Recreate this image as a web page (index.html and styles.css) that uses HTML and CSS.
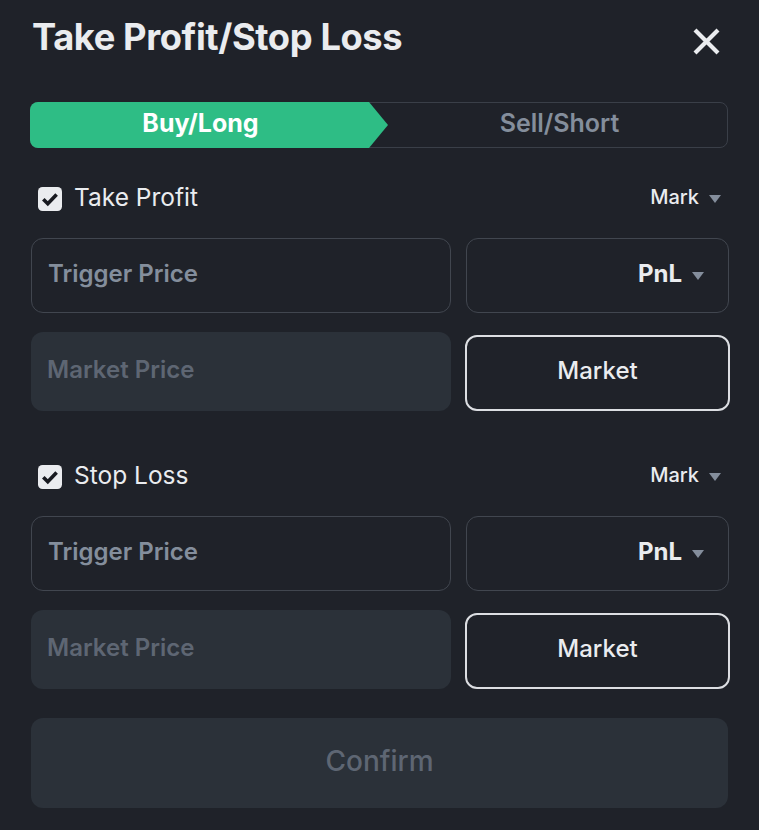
FILE: index.html
```html
<!DOCTYPE html>
<html lang="en">
<head>
<meta charset="utf-8">
<title>Take Profit/Stop Loss</title>
<link rel="stylesheet" href="styles.css">
</head>
<body>
<div class="panel">
  <div class="head">
    <h1 class="title">Take Profit/Stop Loss</h1>
    <svg class="close" width="27" height="27" viewBox="0 0 27 27"><path d="M2 2L25 25M25 2L2 25" stroke="#eaecef" stroke-width="4.2"/></svg>
  </div>

  <div class="tabs">
    <div class="tab tab-active">Buy/Long</div>
    <div class="tab tab-idle">Sell/Short</div>
  </div>

  <div class="section">
    <div class="sec-head">
      <label class="check">
        <svg width="24" height="24" viewBox="0 0 24 24"><rect x="0" y="0" width="24" height="24" rx="4.5" fill="#eaecef"/><path d="M5.3 12.3L9.8 16.8L18.6 7.6" fill="none" stroke="#181a20" stroke-width="3.6"/></svg>
        <span class="check-label">Take Profit</span>
      </label>
      <div class="mark">Mark <span class="caret"></span></div>
    </div>
    <div class="grid">
      <div class="field field-input">Trigger Price</div>
      <div class="field field-select"><span class="pnl">PnL</span><span class="caret"></span></div>
      <div class="field field-disabled">Market Price</div>
      <div class="btn-market">Market</div>
    </div>
  </div>

  <div class="section section-sl">
    <div class="sec-head">
      <label class="check">
        <svg width="24" height="24" viewBox="0 0 24 24"><rect x="0" y="0" width="24" height="24" rx="4.5" fill="#eaecef"/><path d="M5.3 12.3L9.8 16.8L18.6 7.6" fill="none" stroke="#181a20" stroke-width="3.6"/></svg>
        <span class="check-label">Stop Loss</span>
      </label>
      <div class="mark">Mark <span class="caret"></span></div>
    </div>
    <div class="grid">
      <div class="field field-input">Trigger Price</div>
      <div class="field field-select"><span class="pnl">PnL</span><span class="caret"></span></div>
      <div class="field field-disabled">Market Price</div>
      <div class="btn-market">Market</div>
    </div>
  </div>

  <div class="confirm">Confirm</div>
</div>
</body>
</html>
```

FILE: styles.css
```css
* { box-sizing: border-box; }
html, body {
  margin: 0;
  background: #1f2229;
}
body {
  font-family: Inter, "Noto Sans", sans-serif;
  color: #eaecef;
}
.panel {
  width: 759px;
  height: 830px;
  padding: 12px 30px 0 31px;
}
.head {
  height: 52px;
  display: flex;
  align-items: center;
  justify-content: space-between;
}
.title {
  margin: 0 0 2px 0;
  font-size: 36.3px;
  font-weight: 700;
  letter-spacing: -0.4px;
  line-height: 40px;
  color: #eaecef;
  padding-left: 1px;
}
.close {
  margin-right: 9px;
  margin-top: 6px;
}
.tabs {
  margin-top: 38px;
  height: 46px;
  border: 1px solid #3a3f48;
  border-radius: 8px;
  display: flex;
  margin-left: -1px;
  margin-right: 1px;
}
.tab {
  display: flex;
  align-items: center;
  justify-content: center;
  font-size: 25px;
  padding-bottom: 5px;
}
.tab-active {
  width: 358px;
  height: 46px;
  margin: -1px 0 -1px -1px;
  padding-right: 17px;
  background: #2ebd85;
  color: #ffffff;
  font-weight: 700;
  border-radius: 8px 0 0 8px;
  clip-path: polygon(0 0, calc(100% - 19px) 0, 100% 50%, calc(100% - 19px) 100%, 0 100%);
}
.tab-idle {
  flex: 1;
  color: #848e9c;
  font-weight: 600;
  padding-left: 4px;
}
.section {
  margin-top: 39px;
}
.section-sl {
  margin-top: 54px;
}
.sec-head {
  height: 24px;
  display: flex;
  align-items: center;
  justify-content: space-between;
}
.check {
  display: flex;
  align-items: center;
  gap: 13px;
  padding-left: 7px;
}
.check svg { display: block; }
.check-label {
  font-size: 24.5px;
  font-weight: 400;
  color: #eaecef;
  margin-top: -5px;
  margin-left: -1px;
}
.mark {
  display: flex;
  align-items: center;
  gap: 10px;
  font-size: 20px;
  font-weight: 500;
  color: #eaecef;
  padding-right: 8px;
  margin-top: -4px;
}
.caret {
  width: 0;
  height: 0;
  border-left: 6px solid transparent;
  border-right: 6px solid transparent;
  border-top: 8px solid #848e9c;
  margin-top: 4px;
}
.grid {
  margin-top: 27px;
  display: grid;
  grid-template-columns: 420px 263px;
  grid-template-rows: 75px 79px;
  column-gap: 15px;
  row-gap: 19px;
}
.field {
  border-radius: 12px;
  display: flex;
  align-items: center;
  font-size: 24px;
  font-weight: 600;
  padding-bottom: 4px;
}
.field-input {
  border: 1px solid #41464f;
  color: #848e9c;
  padding-left: 16px;
}
.field-select {
  border: 1px solid #41464f;
  justify-content: flex-end;
  gap: 10px;
  padding-right: 24px;
}
.pnl {
  color: #eaecef;
  font-weight: 700;
  font-size: 24px;
}
.field-disabled {
  background: #2b3139;
  color: #5e6673;
  padding-left: 16px;
}
.btn-market {
  margin-top: 3px;
  margin-left: -1px;
  margin-right: -1px;
  border: 2px solid #dcdee2;
  border-radius: 12px;
  display: flex;
  align-items: center;
  justify-content: center;
  font-size: 24px;
  font-weight: 500;
  color: #eaecef;
  padding-bottom: 6px;
}
.confirm {
  margin-top: 29px;
  height: 90px;
  width: 697px;
  border-radius: 12px;
  background: #2b3139;
  display: flex;
  align-items: center;
  justify-content: center;
  font-size: 28px;
  font-weight: 500;
  color: #5e6673;
  padding-bottom: 5px;
}
```
